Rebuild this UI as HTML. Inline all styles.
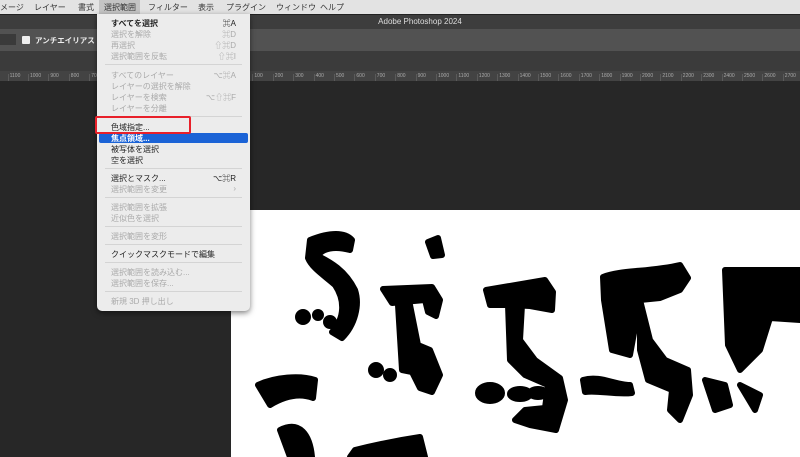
<!DOCTYPE html>
<html><head><meta charset="utf-8"><style>
*{margin:0;padding:0;box-sizing:border-box}
body{width:800px;height:457px;overflow:hidden;background:#272727;font-family:"Liberation Sans","Noto Sans CJK JP",sans-serif;position:relative}
.abs{position:absolute}
#mb{left:0;top:0;width:800px;height:14px;background:#e3e3e3;font-size:8px;color:#333}
#mb span{position:absolute;top:2px}
#tb{left:0;top:14px;width:800px;height:15px;background:#3d3d3d;border-top:1px solid #222;color:#ddd;font-size:8px;text-align:center;line-height:14px;padding-left:40px}
#ob{left:0;top:29px;width:800px;height:22px;background:#525252}
#tab{left:0;top:51px;width:800px;height:20px;background:#3b3b3b}
#ru{left:0;top:71px;width:800px;height:10px;background:#434343;font-size:5px;color:#aaa}
#ru span{position:absolute;top:2px}
#cv{left:231px;top:210px;width:569px;height:247px;background:#fff;overflow:hidden}
#menu{left:97px;top:14px;width:153px;height:297px;background:#ececec;border-radius:0 0 5px 5px;box-shadow:0 2px 6px rgba(0,0,0,.5);font-size:8px;color:#222}
#menu .i{position:absolute;left:14px;white-space:nowrap}
#menu .d{color:#aaa}
#menu .k{position:absolute;right:14px;white-space:nowrap}
#menu .s{position:absolute;left:8px;right:8px;height:1px;background:#d4d4d4}
</style></head><body>
<div id="mb" class="abs">
<span style="left:0">メージ</span><span style="left:34px">レイヤー</span><span style="left:78px">書式</span>
<span style="left:99px;top:0;width:41px;height:14px;background:#c4c4c4"></span><span style="left:104px">選択範囲</span>
<span style="left:148px">フィルター</span><span style="left:198px">表示</span><span style="left:226px">プラグイン</span><span style="left:276px">ウィンドウ</span><span style="left:320px">ヘルプ</span>
</div>
<div id="tb" class="abs">Adobe Photoshop 2024</div>
<div id="ob" class="abs">
<div class="abs" style="left:0;top:5px;width:16px;height:11px;background:#3a3a3a"></div>
<div class="abs" style="left:22px;top:7px;width:8px;height:8px;background:#eee;border-radius:1px"></div>
<div class="abs" style="left:35px;top:6px;font-size:7.5px;color:#eee;font-weight:bold">アンチエイリアス</div>
</div>
<div id="tab" class="abs"></div>
<div id="ru" class="abs"></div>
<div id="cv" class="abs">
<svg width="569" height="247" viewBox="231 210 569 247">
<g fill="#000" stroke="#000" stroke-width="6" stroke-linejoin="round">
<path d="M310 240 C330 232 345 232 352 240 L350 250 C335 246 322 248 318 256 C330 262 345 270 355 290 C360 305 355 325 342 338 L332 332 C345 318 345 300 335 285 C325 276 312 268 308 258 Z"/>
<circle cx="303" cy="317" r="5"/><circle cx="318" cy="315" r="3"/><circle cx="330" cy="322" r="4"/>
<path d="M428 242 L438 238 L442 255 L433 256 Z"/>
<path d="M383 289 L432 287 L440 300 L436 316 L428 312 L425 300 L392 303 Z"/>
<path d="M398 305 L410 305 L418 345 L430 350 L440 375 L432 392 L420 388 L412 372 L402 370 Z"/>
<circle cx="376" cy="370" r="5"/><circle cx="390" cy="375" r="4"/>
<path d="M486 290 L545 280 L553 292 L552 310 L530 306 L510 305 L490 305 Z"/>
<path d="M508 305 L522 305 L520 340 L535 360 L560 378 L565 400 L556 430 L530 425 L515 420 L525 410 L545 408 L548 385 L525 375 L510 360 Z"/>
<ellipse cx="490" cy="393" rx="12" ry="8"/><ellipse cx="520" cy="394" rx="10" ry="5"/><ellipse cx="538" cy="393" rx="8" ry="4"/>
<path d="M603 277 C620 270 650 272 680 265 L688 278 L680 290 L660 298 L640 300 L630 355 L612 350 L604 300 Z"/>
<path d="M640 300 L650 340 L665 360 L688 370 L690 395 L680 420 L670 410 L672 390 L648 380 L640 350 Z"/>
<path d="M583 380 C600 375 615 385 630 385 L632 393 C615 395 598 390 585 392 Z"/>
<path d="M725 270 L800 270 L800 320 L770 318 L760 350 L740 370 L728 345 Z"/>
<path d="M705 380 L725 385 L730 405 L715 410 Z"/><path d="M740 385 L760 395 L755 410 Z"/>
<path d="M258 385 C275 377 300 375 315 380 L313 398 C300 393 285 396 270 405 Z"/>
<path d="M280 430 C300 420 310 435 312 457 L290 457 Z"/>
<path d="M350 457 L355 450 C375 445 400 440 420 437 L425 457 Z"/>
</g></svg>
</div>
<div id="menu" class="abs">
<div class="i" style="top:4px;font-weight:bold">すべてを選択</div><div class="k" style="top:4px">⌘A</div>
<div class="i d" style="top:15px">選択を解除</div><div class="k d" style="top:15px">⌘D</div>
<div class="i d" style="top:26px">再選択</div><div class="k d" style="top:26px">⇧⌘D</div>
<div class="i d" style="top:37px">選択範囲を反転</div><div class="k d" style="top:37px">⇧⌘I</div>
<div class="s" style="top:50px"></div>
<div class="i d" style="top:56px">すべてのレイヤー</div><div class="k d" style="top:56px">⌥⌘A</div>
<div class="i d" style="top:67px">レイヤーの選択を解除</div>
<div class="i d" style="top:78px">レイヤーを検索</div><div class="k d" style="top:78px">⌥⇧⌘F</div>
<div class="i d" style="top:89px">レイヤーを分離</div>
<div class="s" style="top:102px"></div>
<div class="i" style="top:108px">色域指定...</div>
<div class="abs" style="left:2px;right:2px;top:119px;height:10px;background:#1b63d6;border-radius:2px"></div>
<div class="i" style="top:119px;color:#fff;font-weight:bold">焦点領域...</div>
<div class="i" style="top:130px">被写体を選択</div>
<div class="i" style="top:141px">空を選択</div>
<div class="s" style="top:154px"></div>
<div class="i" style="top:159px">選択とマスク...</div><div class="k" style="top:159px">⌥⌘R</div>
<div class="i d" style="top:170px">選択範囲を変更</div><div class="k d" style="top:170px">›</div>
<div class="s" style="top:183px"></div>
<div class="i d" style="top:188px">選択範囲を拡張</div>
<div class="i d" style="top:199px">近似色を選択</div>
<div class="s" style="top:212px"></div>
<div class="i d" style="top:217px">選択範囲を変形</div>
<div class="s" style="top:230px"></div>
<div class="i" style="top:235px">クイックマスクモードで編集</div>
<div class="s" style="top:248px"></div>
<div class="i d" style="top:253px">選択範囲を読み込む...</div>
<div class="i d" style="top:264px">選択範囲を保存...</div>
<div class="s" style="top:277px"></div>
<div class="i d" style="top:282px">新規 3D 押し出し</div>
</div>
<div class="abs" style="left:95px;top:116px;width:96px;height:18px;border:2px solid #e8202a;border-radius:2px"></div>
<script>
var r=document.getElementById('ru'),h='';
for(var v=-1100;v<=2800;v+=100){var x=232+v*20.4/100;h+='<span style="left:'+(x+2)+'px">'+Math.abs(v)+'</span><i style="position:absolute;left:'+x+'px;top:3px;width:1px;height:7px;background:#5a5a5a"></i>';}
r.innerHTML=h;
</script>
</body></html>
